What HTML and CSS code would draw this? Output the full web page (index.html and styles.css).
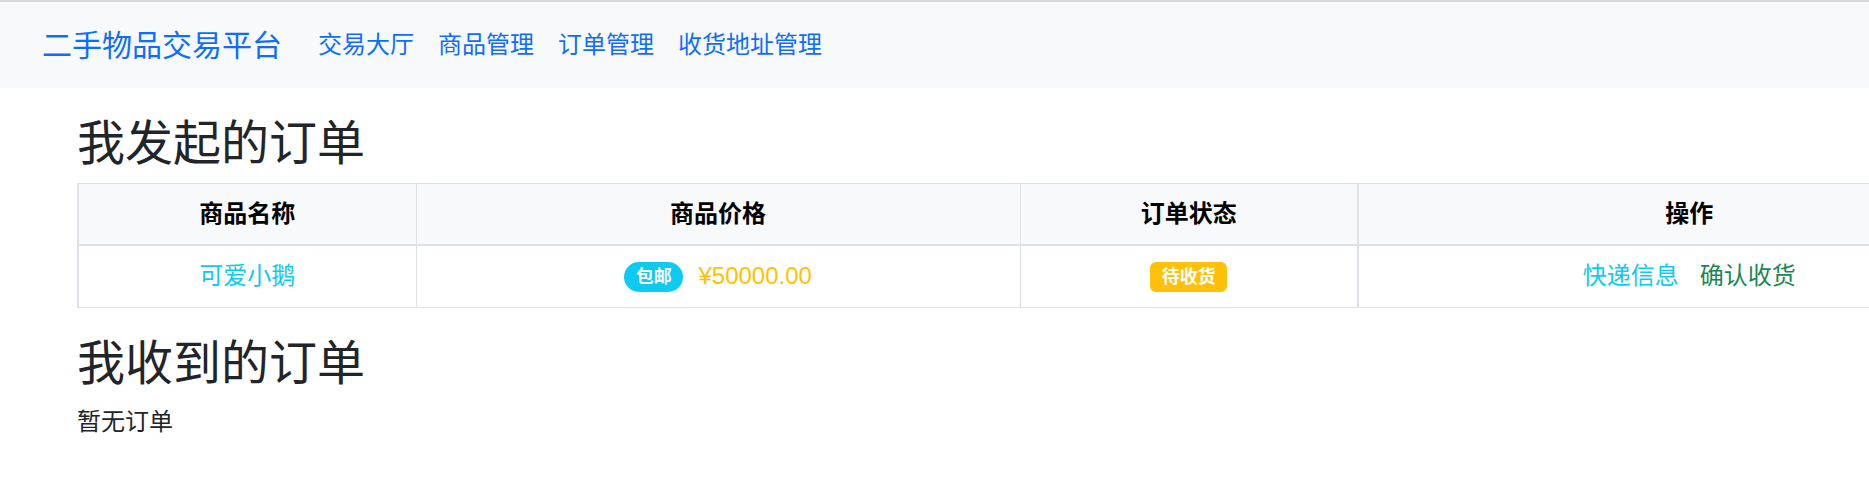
FILE: index.html
```html
<!DOCTYPE html>
<html lang="zh-CN">
<head>
<meta charset="utf-8">
<title>我的订单 - 二手物品交易平台</title>
<link rel="stylesheet" href="styles.css">
</head>
<body>
<nav class="navbar">
  <a class="brand" href="#">二手物品交易平台</a>
  <ul class="nav">
    <li><a class="nav-link" href="#">交易大厅</a></li>
    <li><a class="nav-link" href="#">商品管理</a></li>
    <li><a class="nav-link" href="#">订单管理</a></li>
    <li><a class="nav-link" href="#">收货地址管理</a></li>
  </ul>
</nav>
<main class="container">
  <h2 class="title first">我发起的订单</h2>
  <table class="orders">
    <colgroup>
      <col class="c-name">
      <col class="c-price">
      <col class="c-status">
      <col class="c-ops">
    </colgroup>
    <thead>
      <tr>
        <th>商品名称</th>
        <th>商品价格</th>
        <th>订单状态</th>
        <th>操作</th>
      </tr>
    </thead>
    <tbody>
      <tr>
        <td><a class="text-info" href="#">可爱小鹅</a></td>
        <td><span class="badge pill bg-info">包邮</span><span class="price">¥50000.00</span></td>
        <td><span class="badge bg-warning">待收货</span></td>
        <td><a class="act text-info" href="#">快递信息</a><a class="act text-success" href="#">确认收货</a></td>
      </tr>
    </tbody>
  </table>
  <h2 class="title">我收到的订单</h2>
  <p class="empty">暂无订单</p>
</main>
</body>
</html>
```

FILE: styles.css
```css
html, body {
  margin: 0;
  overflow-x: hidden;
}

body {
  font-family: "Liberation Sans", "Noto Sans CJK SC", sans-serif;
  font-size: 24px;
  line-height: 1.5;
  color: #212529;
  background: #fff;
}

a {
  text-decoration: none;
}

.navbar {
  display: flex;
  align-items: center;
  height: 86px;
  padding-left: 42px;
  border-top: 2px solid #d9dadd;
  background: #f8f9fa;
}

.brand {
  font-size: 30px;
  line-height: 45px;
  color: #0d6efd;
  margin-right: 24px;
}

.nav {
  display: flex;
  list-style: none;
  margin: 0;
  padding: 0;
}

.nav-link {
  display: block;
  padding: 0 12px;
  color: #0d6efd;
}

.container {
  padding: 27px 0 0 77px;
  overflow: hidden;
}

.title {
  font-size: 48px;
  font-weight: 400;
  line-height: 1.2;
  margin: 0 0 12px;
}

.title.first {
  margin-bottom: 10px;
}

.orders {
  border-collapse: collapse;
  table-layout: fixed;
  width: 1942px;
  margin-bottom: 27px;
  border-left: 2px solid #dee2e6;
}

.c-name { width: 338px; }
.c-price { width: 604px; }
.c-status { width: 338px; }
.c-ops { width: 662px; }

.orders th,
.orders td {
  padding: 12px;
  border: 1px solid #dee2e6;
  text-align: center;
  vertical-align: middle;
}

.orders td {
  padding: 12.5px 12px;
}

.orders th {
  background: #f8f9fa;
  color: #000;
  font-weight: 700;
  border-bottom: 2px solid #dee2e6;
}

.orders th:nth-child(4),
.orders td:nth-child(4) {
  border-left: 2px solid #dee2e6;
}

.text-info { color: #0dcaf0; }
.text-success { color: #198754; }

.badge {
  display: inline-block;
  padding: 6.3px 11.7px;
  font-size: 18px;
  font-weight: 700;
  line-height: 1;
  color: #fff;
  border-radius: 6px;
  vertical-align: 1px;
}

.pill { border-radius: 50px; }
.bg-info { background: #0dcaf0; }
.bg-warning { background: #ffc107; }

.price {
  color: #ffc107;
  margin-left: 15px;
}

.act + .act {
  margin-left: 21px;
}

.empty {
  margin: 2px 0 0;
}
```
